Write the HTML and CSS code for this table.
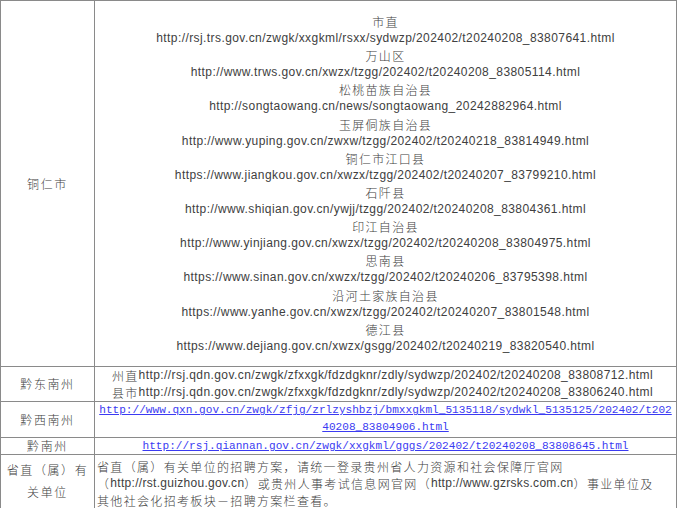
FILE: index.html
```html
<!DOCTYPE html>
<html lang="zh-CN">
<head>
<meta charset="utf-8">
<title>招聘方案链接</title>
<link rel="stylesheet" href="styles.css">
</head>
<body>
<table class="grid">
  <colgroup><col class="c-name"><col class="c-body"></colgroup>
  <tr class="row-tr">
    <td class="name">铜仁市</td>
    <td class="list">
      <div class="cn">市直</div>
      <div class="url">http://rsj.trs.gov.cn/zwgk/xxgkml/rsxx/sydwzp/202402/t20240208_83807641.html</div>
      <div class="cn">万山区</div>
      <div class="url">http://www.trws.gov.cn/xwzx/tzgg/202402/t20240208_83805114.html</div>
      <div class="cn">松桃苗族自治县</div>
      <div class="url">http://songtaowang.cn/news/songtaowang_20242882964.html</div>
      <div class="cn">玉屏侗族自治县</div>
      <div class="url">http://www.yuping.gov.cn/zwxw/tzgg/202402/t20240218_83814949.html</div>
      <div class="cn">铜仁市江口县</div>
      <div class="url">https://www.jiangkou.gov.cn/xwzx/tzgg/202402/t20240207_83799210.html</div>
      <div class="cn">石阡县</div>
      <div class="url">http://www.shiqian.gov.cn/ywjj/tzgg/202402/t20240208_83804361.html</div>
      <div class="cn">印江自治县</div>
      <div class="url">http://www.yinjiang.gov.cn/xwzx/tzgg/202402/t20240208_83804975.html</div>
      <div class="cn">思南县</div>
      <div class="url">https://www.sinan.gov.cn/xwzx/tzgg/202402/t20240206_83795398.html</div>
      <div class="cn">沿河土家族自治县</div>
      <div class="url">https://www.yanhe.gov.cn/xwzx/tzgg/202402/t20240207_83801548.html</div>
      <div class="cn">德江县</div>
      <div class="url">https://www.dejiang.gov.cn/xwzx/gsgg/202402/t20240219_83820540.html</div>
    </td>
  </tr>
  <tr class="row-qdn">
    <td class="name">黔东南州</td>
    <td class="left pad">
      <div class="line"><span class="cn">州直</span><span class="url">http://rsj.qdn.gov.cn/zwgk/zfxxgk/fdzdgknr/zdly/sydwzp/202402/t20240208_83808712.html</span></div>
      <div class="line"><span class="cn">县市</span><span class="url">http://rsj.qdn.gov.cn/zwgk/zfxxgk/fdzdgknr/zdly/sydwzp/202402/t20240208_83806240.html</span></div>
    </td>
  </tr>
  <tr class="row-qxn">
    <td class="name">黔西南州</td>
    <td class="center"><a class="link" href="#">http://www.qxn.gov.cn/zwgk/zfjg/zrlzyshbzj/bmxxgkml_5135118/sydwkl_5135125/202402/t202<br>40208_83804906.html</a></td>
  </tr>
  <tr class="row-qn">
    <td class="name">黔南州</td>
    <td class="center"><a class="link" href="#">http://rsj.qiannan.gov.cn/zwgk/xxgkml/gggs/202402/t20240208_83808645.html</a></td>
  </tr>
  <tr class="row-sz">
    <td class="name tall">省直（属）有<br>关单位</td>
    <td class="left note">
      <div class="line">省直（属）有关单位的招聘方案，请统一登录贵州省人力资源和社会保障厅官网</div>
      <div class="line">（<span class="url">http://rst.guizhou.gov.cn</span>）或贵州人事考试信息网官网（<span class="url">http://www.gzrsks.com.cn</span>）事业单位及</div>
      <div class="line">其他社会化招考板块－招聘方案栏查看。</div>
    </td>
  </tr>
</table>
</body>
</html>
```

FILE: styles.css
```css
html, body {
  margin: 0;
  padding: 0;
  background: #ffffff;
}

.grid {
  border-collapse: collapse;
  width: 677px;
  table-layout: fixed;
  color: #404040;
  font-family: "Noto Sans CJK SC", sans-serif;
  font-weight: 300;
  font-size: 12px;
  line-height: 17px;
}

.c-name { width: 94px; }

.grid td {
  border: 1px solid #8a8a8a;
  padding: 0;
  vertical-align: middle;
}

.name {
  text-align: center;
  letter-spacing: 1.6px;
  line-height: 17px;
}

.name.tall {
  line-height: 22px;
  padding-bottom: 6px;
}

.cn {
  font-family: "Noto Sans CJK SC", sans-serif;
  font-size: 12px;
  letter-spacing: 1.3px;
}

.url {
  font-family: "Liberation Sans", Arial, sans-serif;
  font-weight: 400;
  font-size: 12px;
  letter-spacing: 0.42px;
}

.list {
  text-align: center;
  line-height: 17.1px;
  padding: 12px 0 11px 0 !important;
}

.line {
  height: 17px;
  line-height: 17px;
  white-space: nowrap;
  overflow: hidden;
}

.line .cn,
.line .url {
  vertical-align: top;
  line-height: 17px;
}

.row-qdn td { height: 34px; }
.row-qxn td { height: 35px; line-height: 17px; }
.row-qn td { height: 16px; line-height: 16px; }
.row-sz td { height: 52px; }

.left { text-align: left; }
.center { text-align: center; }

.pad {
  padding-left: 17px !important;
}

.link {
  color: #3b3bf2;
  text-decoration: underline;
  font-family: "Liberation Mono", "Courier New", monospace;
  font-weight: 400;
  font-size: 11.1px;
  vertical-align: top;
}

.row-qxn .link { line-height: 17px; }
.row-qn .link { line-height: 16px; }

.note {
  padding-left: 2px !important;
  letter-spacing: 1.33px;
}

.note .url {
  letter-spacing: 0.3px;
}
```
